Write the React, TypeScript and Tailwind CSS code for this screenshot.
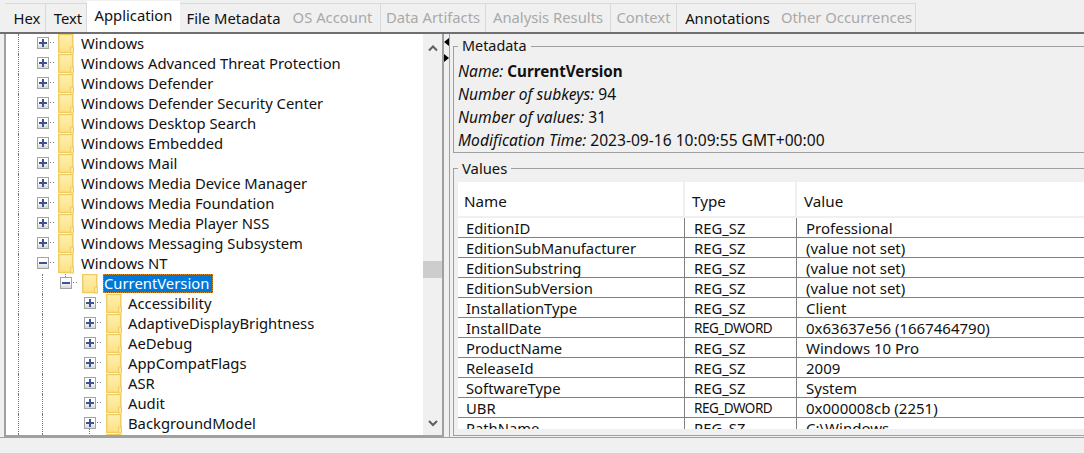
const FONT = "font-['Noto_Sans',sans-serif]";

const TABS = [
  { label: "Hex", width: "w-[41px]", state: "normal", textY: "pl-[4px]" },
  { label: "Text", width: "w-[41px]", state: "normal", textY: "pl-[4px]" },
  { label: "Application", width: "w-[93px]", state: "active", textY: "pb-[3px]" },
  { label: "File Metadata", width: "w-[105px]", state: "plain", textY: "pl-[3px] pt-[1px]" },
  { label: "OS Account", width: "w-[96px]", state: "disabled", textY: "pb-[2px]" },
  { label: "Data Artifacts", width: "w-[105px]", state: "disabled", textY: "pb-[2px]" },
  { label: "Analysis Results", width: "w-[125px]", state: "disabled", textY: "pb-[2px]" },
  { label: "Context", width: "w-[66px]", state: "disabled", textY: "pb-[2px]" },
  { label: "Annotations", width: "w-[99px]", state: "plain", textY: "pl-[3px] pt-[1px]" },
  { label: "Other Occurrences", width: "w-[140px]", state: "disabled", textY: "pl-[2px] pb-[2px]" },
];

type TreeRow = {
  label: string;
  level: 0 | 1 | 2;
  open?: boolean;
  selected?: boolean;
  stubTop?: boolean;
  stubBottom?: boolean;
};

const TREE: TreeRow[] = [
  { label: "Windows", level: 0 },
  { label: "Windows Advanced Threat Protection", level: 0 },
  { label: "Windows Defender", level: 0 },
  { label: "Windows Defender Security Center", level: 0 },
  { label: "Windows Desktop Search", level: 0 },
  { label: "Windows Embedded", level: 0 },
  { label: "Windows Mail", level: 0 },
  { label: "Windows Media Device Manager", level: 0 },
  { label: "Windows Media Foundation", level: 0 },
  { label: "Windows Media Player NSS", level: 0 },
  { label: "Windows Messaging Subsystem", level: 0 },
  { label: "Windows NT", level: 0, open: true },
  { label: "CurrentVersion", level: 1, open: true, selected: true, stubTop: true },
  { label: "Accessibility", level: 2 },
  { label: "AdaptiveDisplayBrightness", level: 2 },
  { label: "AeDebug", level: 2 },
  { label: "AppCompatFlags", level: 2 },
  { label: "ASR", level: 2 },
  { label: "Audit", level: 2 },
  { label: "BackgroundModel", level: 2, stubBottom: true },
  { label: "", level: 2 },
];

const VALUES = [
  ["EditionID", "REG_SZ", "Professional"],
  ["EditionSubManufacturer", "REG_SZ", "(value not set)"],
  ["EditionSubstring", "REG_SZ", "(value not set)"],
  ["EditionSubVersion", "REG_SZ", "(value not set)"],
  ["InstallationType", "REG_SZ", "Client"],
  ["InstallDate", "REG_DWORD", "0x63637e56 (1667464790)"],
  ["ProductName", "REG_SZ", "Windows 10 Pro"],
  ["ReleaseId", "REG_SZ", "2009"],
  ["SoftwareType", "REG_SZ", "System"],
  ["UBR", "REG_DWORD", "0x000008cb (2251)"],
  ["PathName", "REG_SZ", "C:\\Windows"],
];

// Expander box with its dotted connectors
function Expander({ row }: { row: TreeRow }) {
  const dx = row.level === 0 ? 1 : 0;
  return (
    <svg width="27" height="20" viewBox="0 0 27 20" className="shrink-0">
      <defs>
        <linearGradient id="exp" x1="0" y1="0" x2="0" y2="1">
          <stop offset="0.4" stopColor="#ffffff" />
          <stop offset="1" stopColor="#d4d4d8" />
        </linearGradient>
      </defs>
      <g transform={`translate(${dx} 0)`}>
        {row.stubTop && <path d="M10.5 0V3" stroke="#777" strokeDasharray="1 1" />}
        {row.stubBottom && <path d="M10.5 15V20" stroke="#777" strokeDasharray="1 1" />}
        <path d="M18 8.5H23" stroke="#777" strokeDasharray="1 2" />
        <rect x="5.5" y="3.5" width="11" height="11" fill="url(#exp)" stroke="#a3a3a3" />
        <rect x="7" y="8" width="8" height="2" fill="#3d5290" />
        {!row.open && <rect x="10" y="5" width="2" height="8" fill="#3d5290" />}
      </g>
    </svg>
  );
}

function Folder() {
  return (
    <svg width="17" height="20" viewBox="0 0 17 20" className="shrink-0">
      <defs>
        <linearGradient id="fold" x1="0" y1="0" x2="0" y2="1">
          <stop offset="0" stopColor="#fff0ae" />
          <stop offset="1" stopColor="#fde084" />
        </linearGradient>
      </defs>
      <rect x="0.75" y="0.5" width="14" height="18" fill="url(#fold)" stroke="#f0cd62" strokeWidth="1.5" />
      <rect x="12.5" y="13" width="3" height="6" fill="#fde79c" stroke="#f0cd62" />
    </svg>
  );
}

function Guide({ on, width }: { on?: boolean; width: string }) {
  return (
    <div className={`h-full shrink-0 ${width}`}>
      {on && <div className="ml-[11px] h-full w-0 border-l border-dotted border-[#777]" />}
    </div>
  );
}

function TreeItem({ row }: { row: TreeRow }) {
  return (
    <div className="flex h-[20px] shrink-0 items-center text-[14.8px] leading-[20px] text-[#111]">
      <Guide on width="w-[24px]" />
      {row.level >= 1 && <Guide on width="w-[24px]" />}
      {row.level === 2 && <Guide width="w-[24px]" />}
      <Expander row={row} />
      <Folder />
      {row.label && (
        <span
          className={
            row.selected
              ? "ml-[4px] mb-[1px] flex h-[19px] w-[110px] items-center border border-dotted border-[#d9882a] bg-[#0078d7] pb-[1px] text-white"
              : row.level === 2
                ? "ml-[5px] mb-[2px] whitespace-nowrap"
                : "ml-[6px] mb-[2px] whitespace-nowrap"
          }
        >
          {row.label}
        </span>
      )}
    </div>
  );
}

function Chevron({ up }: { up?: boolean }) {
  return (
    <svg width="18" height="16" viewBox="0 0 18 16">
      <path d={up ? "M5 10.5 9 6.5 13 10.5" : "M5 6 9 10 13 6"} fill="none" stroke="#606060" strokeWidth="2" />
    </svg>
  );
}

function MetaLine({ label, value, bold }: { label: string; value: string; bold?: boolean }) {
  return (
    <div className="h-[23px] whitespace-nowrap text-[15.6px] leading-[23px]">
      <span className="italic">{label}: </span>
      <span className={bold ? "text-[15.2px] font-bold" : ""}>{value}</span>
    </div>
  );
}

export default function App() {
  return (
    <div className={`flex h-[453px] w-[1084px] flex-col overflow-hidden bg-[#f0f0f0] text-[14.8px] text-[#111] ${FONT}`}>
      {/* Tabs */}
      <div className="flex h-[32px] shrink-0 items-end pl-[5px]">
        {TABS.map((tab) => (
          <div
            key={tab.label}
            className={[
              "flex shrink-0 items-center justify-center whitespace-nowrap",
              tab.width,
              tab.textY,
              tab.state === "active"
                ? "h-[31px] bg-white text-[#111]"
                : "h-[29px] border-r border-t border-[#d9d9d9]",
              tab.state === "disabled" ? "text-[#a9a9a9]" : "",
              tab.state === "plain" ? "border-r-transparent" : "",
            ].join(" ")}
          >
            {tab.label}
          </div>
        ))}
      </div>

      {/* Split pane */}
      <div className="flex h-[405px] shrink-0 border-t-2 border-[#6f6f6f] pl-[4px]">
        {/* Tree */}
        <div className="flex w-[440px] shrink-0 border-2 border-t-0 border-[#a0a0a0] bg-white">
          <div className="flex min-w-0 flex-1 flex-col overflow-hidden pl-[1px]">
            {TREE.map((row, i) => (
              <TreeItem key={i} row={row} />
            ))}
          </div>
          <div className="flex w-[19px] shrink-0 flex-col items-center bg-[#f0f0f0]">
            <div className="mt-[6px]">
              <Chevron up />
            </div>
            <div className="mt-[205px] h-[17px] w-full bg-[#cdcdcd]" />
            <div className="flex-1" />
            <div className="mb-[4px]">
              <Chevron />
            </div>
          </div>
        </div>

        {/* Splitter */}
        <div className="flex w-[6px] shrink-0 flex-col border-r border-[#a0a0a0] pt-[4px]">
          <svg width="5" height="28" viewBox="0 0 5 28">
            <path d="M5 0V8L0 4Z" fill="#000" />
            <path d="M0 16V24L5 20Z" fill="#000" />
          </svg>
        </div>

        {/* Details */}
        <div className="flex w-[640px] shrink-0 flex-col pl-[3px]">
          <fieldset className="mt-[2px] h-[117px] shrink-0 border border-r-0 border-[#a0a0a0] pl-[4px] pt-[4px]">
            <legend className="px-[4px] text-[14.4px] leading-[20px]">Metadata</legend>
            <MetaLine label="Name" value="CurrentVersion" bold />
            <MetaLine label="Number of subkeys" value="94" />
            <MetaLine label="Number of values" value="31" />
            <MetaLine label="Modification Time" value="2023-09-16 10:09:55 GMT+00:00" />
          </fieldset>

          <fieldset className="mt-[5px] h-[278px] shrink-0 border border-r-0 border-[#a0a0a0] pl-[4px] pt-[4px]">
            <legend className="px-[4px] leading-[20px]">Values</legend>
            <div className="flex h-[247px] flex-col overflow-hidden bg-white">
              <div className="flex h-[36px] shrink-0 items-center border-b-2 border-[#f0f0f0] text-[15.2px]">
                <div className="h-full w-[227px] shrink-0 border-r-2 border-[#f0f0f0] pl-[6px] leading-[38px]">Name</div>
                <div className="h-full w-[112px] shrink-0 border-r-2 border-[#f0f0f0] pl-[7px] leading-[38px]">Type</div>
                <div className="h-full flex-1 pl-[7px] leading-[38px]">Value</div>
              </div>
              {VALUES.map((row) => (
                <div key={row[0]} className="flex h-[20px] shrink-0 border-b border-[#808080] leading-[20px]">
                  <div className="w-[227px] shrink-0 whitespace-nowrap border-r border-[#808080] pl-[8px]">{row[0]}</div>
                  <div
                    className={
                      row[1] === "REG_DWORD"
                        ? "w-[112px] shrink-0 border-r border-[#808080] pl-[9px] text-[13.5px] tracking-[-0.5px]"
                        : "w-[112px] shrink-0 border-r border-[#808080] pl-[9px] text-[14.8px]"
                    }
                  >
                    {row[1]}
                  </div>
                  <div className="flex-1 pl-[9px] text-[15px]">{row[2]}</div>
                </div>
              ))}
            </div>
            <div className="h-[3px] bg-[#f0f0f0]" />
          </fieldset>
        </div>
      </div>

      <div className="flex-1 border-t border-[#a0a0a0]" />
    </div>
  );
}
